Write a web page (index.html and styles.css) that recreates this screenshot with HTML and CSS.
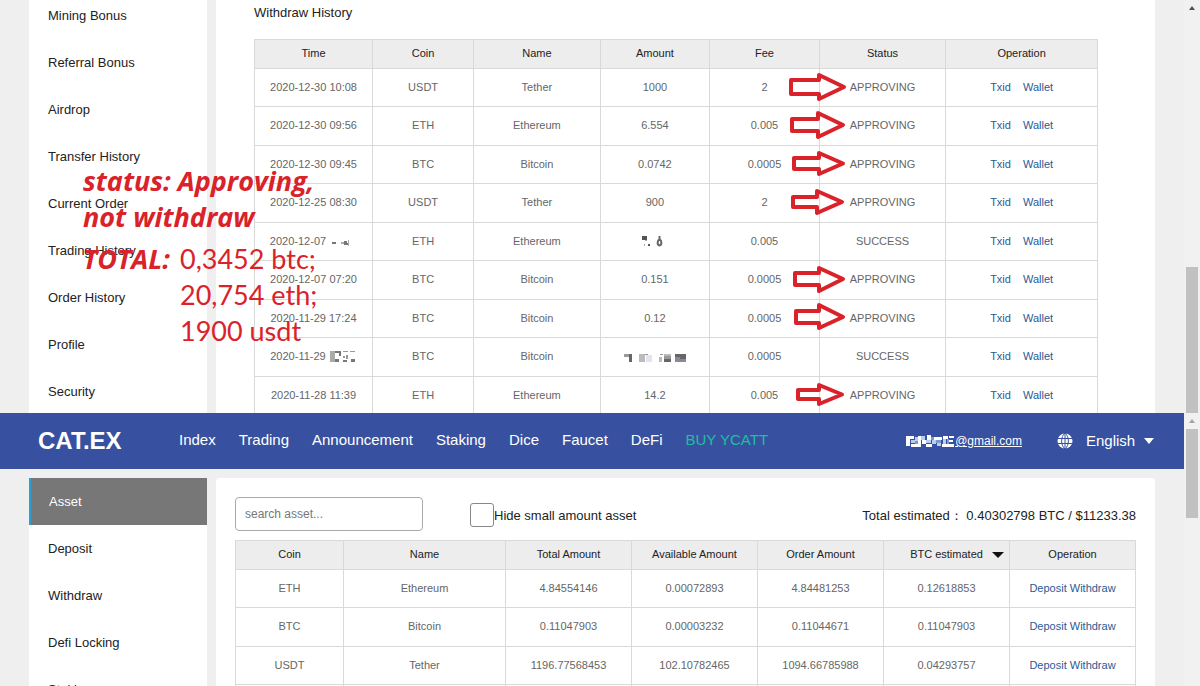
FILE: index.html
```html
<!DOCTYPE html>
<html lang="en">
<head>
  <meta charset="UTF-8" />
  <meta name="viewport" content="width=device-width, initial-scale=1.0"/>
  <title>CAT.EX – Asset</title>
  <link rel="stylesheet" href="styles.css">
</head>
<body>

  <section class="pane pane-history">
    <div class="layout">
      <nav class="sidebar">
        <a href="#">Mining Bonus</a>
        <a href="#">Referral Bonus</a>
        <a href="#">Airdrop</a>
        <a href="#">Transfer History</a>
        <a href="#">Current Order</a>
        <a href="#">Trading History</a>
        <a href="#">Order History</a>
        <a href="#">Profile</a>
        <a href="#">Security</a>
      </nav>

      <main class="history">
        <h2>Withdraw History</h2>
        <table class="history-table">
          <thead>
            <tr><th>Time</th><th>Coin</th><th>Name</th><th>Amount</th><th>Fee</th><th>Status</th><th>Operation</th></tr>
          </thead>
          <tbody>
            <tr>
              <td>2020-12-30 10:08</td><td>USDT</td><td>Tether</td><td>1000</td><td>2</td>
              <td class="status">APPROVING<svg class="arrow" viewBox="0 0 64 38"><path d="M5 12H33V7L58 19L33 31V26H5Z"/></svg></td>
              <td class="ops"><a href="#">Txid</a><a href="#">Wallet</a></td>
            </tr>
            <tr>
              <td>2020-12-30 09:56</td><td>ETH</td><td>Ethereum</td><td>6.554</td><td>0.005</td>
              <td class="status">APPROVING<svg class="arrow" viewBox="0 0 64 38"><path d="M6 13H32V7L57 19L32 31V25H6Z"/></svg></td>
              <td class="ops"><a href="#">Txid</a><a href="#">Wallet</a></td>
            </tr>
            <tr>
              <td>2020-12-30 09:45</td><td>BTC</td><td>Bitcoin</td><td>0.0742</td><td>0.0005</td>
              <td class="status">APPROVING<svg class="arrow" viewBox="0 0 64 38"><path d="M8 13H33V8L57 18.5L33 29V24H8Z"/></svg></td>
              <td class="ops"><a href="#">Txid</a><a href="#">Wallet</a></td>
            </tr>
            <tr>
              <td>2020-12-25 08:30</td><td>USDT</td><td>Tether</td><td>900</td><td>2</td>
              <td class="status">APPROVING<svg class="arrow" viewBox="0 0 64 38"><path d="M7 14H31V8L56 19L31 30V24H7Z"/></svg></td>
              <td class="ops"><a href="#">Txid</a><a href="#">Wallet</a></td>
            </tr>
            <tr>
              <td>2020-12-07 <svg class="mosaic" width="28" height="10" viewBox="0 0 28 10"><path fill="#777" d="M3 5h4v2H3zM15 4h3v4h-3zM18 6h2v2h-2z"/><path fill="#aaa" d="M12 5h3v2h-3zM19 3h1v6h-1z"/></svg></td>
              <td>ETH</td><td>Ethereum</td>
              <td><svg class="mosaic" width="28" height="12" viewBox="0 0 28 12"><path fill="#555" d="M1 1h5v4H1zM7 9h2v2H7z"/><path fill="#aaa" d="M3 9h1v2H3zM4 5h2v1H4z"/><path fill="none" stroke="#666" stroke-width="2" d="M18.500 4.500C16 5.500 16 10 18.500 10.500C21 10 21 5.500 18.500 4.500ZM18.500 1v3"/></svg></td>
              <td>0.005</td><td class="status">SUCCESS</td>
              <td class="ops"><a href="#">Txid</a><a href="#">Wallet</a></td>
            </tr>
            <tr>
              <td>2020-12-07 07:20</td><td>BTC</td><td>Bitcoin</td><td>0.151</td><td>0.0005</td>
              <td class="status">APPROVING<svg class="arrow" viewBox="0 0 64 38"><path d="M9 13H33V8L57 19L33 31V25H9Z"/></svg></td>
              <td class="ops"><a href="#">Txid</a><a href="#">Wallet</a></td>
            </tr>
            <tr>
              <td>2020-11-29 17:24</td><td>BTC</td><td>Bitcoin</td><td>0.12</td><td>0.0005</td>
              <td class="status">APPROVING<svg class="arrow" viewBox="0 0 64 38"><path d="M10 12H33V6L57 18L33 29V24H10Z"/></svg></td>
              <td class="ops"><a href="#">Txid</a><a href="#">Wallet</a></td>
            </tr>
            <tr>
              <td>2020-11-29 <svg class="mosaic" width="28" height="11" viewBox="0 0 28 11"><path fill="#aaa" d="M1 0h5v11H1z"/><path fill="#777" d="M6 0h4v2H6zM6 8h4v3H6zM10 0h2v5h-2zM14 9h4v2h-4zM22 8h4v3h-4z"/><path fill="#999" d="M14 0h5v1h-5zM21 0h5v1h-5zM17 4h2v4h-2zM14 5h2v2h-2z"/></svg></td>
              <td>BTC</td><td>Bitcoin</td>
              <td><svg class="mosaic" width="62" height="9" viewBox="0 0 62 9"><path fill="#999" d="M0 1h7v3H0zM21 1h3v1h-3zM36 1h3v1h-3zM40 3h7v4h-7z"/><path fill="#666" d="M5 1h3v8H5zM40 6h7v3h-7zM51 1h11v5H51z"/><path fill="#bbb" d="M15 1h6v8h-6zM35 4h3v5h-3zM40 1h7v2h-7z"/><path fill="#e2e4f0" d="M22 2h6v7h-6z"/><path fill="#8a8a96" d="M51 4h5v5h-5zM56 6h6v3h-6z"/></svg></td>
              <td>0.0005</td><td class="status">SUCCESS</td>
              <td class="ops"><a href="#">Txid</a><a href="#">Wallet</a></td>
            </tr>
            <tr>
              <td>2020-11-28 11:39</td><td>ETH</td><td>Ethereum</td><td>14.2</td><td>0.005</td>
              <td class="status">APPROVING<svg class="arrow" viewBox="0 0 64 38"><path d="M12 14H33V9L56 18.5L33 28V23H12Z"/></svg></td>
              <td class="ops"><a href="#">Txid</a><a href="#">Wallet</a></td>
            </tr>
          </tbody>
        </table>
      </main>
    </div>
    <div class="scrollbar">
      <svg width="6" height="4" viewBox="0 0 6 4"><path fill="#505050" d="M0 4L3 0L6 4Z"/></svg>
      <div class="thumb thumb-history"></div>
    </div>

    <div class="note">
      <p><b>status: Approving,<br>not withdraw</b></p>
      <dl>
        <dt>TOTAL:</dt>
        <dd>0,3452 btc;</dd>
        <dd>20,754 eth;</dd>
        <dd>1900 usdt</dd>
      </dl>
    </div>
  </section>

  <section class="pane pane-asset">
    <div class="page">
      <header>
        <a class="logo" href="#">CAT.EX</a>
        <nav class="menu">
          <a href="#">Index</a>
          <a href="#">Trading</a>
          <a href="#">Announcement</a>
          <a href="#">Staking</a>
          <a href="#">Dice</a>
          <a href="#">Faucet</a>
          <a href="#">DeFi</a>
          <a class="buy" href="#">BUY YCATT</a>
        </nav>
        <a class="account" href="#"><svg width="49" height="13" viewBox="0 0 49 13"><path fill="#fff" d="M0 1h8v3H0zM0 4h4v7H0zM5 9h10v3H5zM12 1h3v8h-3zM16 5h4v4h-4zM21 0h4v5h-4zM20 9h6v3h-6zM28 2h8v3h-8zM37 1h5v3h-5zM43 1h5v2h-5zM36 9h12v3H36zM43 5h4v2h-4z"/><path fill="#b9cdf0" d="M5 5h4v3H5zM9 2h3v4H9zM15 1h4v4h-4zM20 5h5v3h-5zM26 5h4v4h-4zM31 8h4v3h-4zM37 4h3v5h-3z"/><path fill="#7f98d0" d="M9 6h3v3H9zM25 2h3v3h-3zM30 5h5v3h-5zM41 4h2v5h-2z"/></svg>@gmail.com</a>
        <div class="language">
          <svg width="16" height="16" viewBox="0 0 16 16"><circle cx="8" cy="8" r="7.500" fill="#fff"/><path fill="none" stroke="#3751a0" d="M0 5.500h16M0 10.500h16M8 0v16M8 0C3.500 3.500 3.500 12.500 8 16M8 0C12.500 3.500 12.500 12.500 8 16"/></svg>
          <select aria-label="Language"><option>English</option></select>
          <svg width="10" height="6" viewBox="0 0 10 6"><path fill="#fff" d="M0 0H10L5 6Z"/></svg>
        </div>
      </header>

      <div class="layout">
        <nav class="sidebar">
          <a class="active" href="#">Asset</a>
          <a href="#">Deposit</a>
          <a href="#">Withdraw</a>
          <a href="#">Defi Locking</a>
          <a href="#">Staking</a>
        </nav>

        <main class="asset">
          <div class="toolbar">
            <input type="text" class="search" placeholder="search asset..." aria-label="search asset" />
            <label><input type="checkbox" />Hide small amount asset</label>
            <p>Total estimated： 0.40302798 BTC / $11233.38</p>
          </div>
          <table class="asset-table">
            <thead>
              <tr>
                <th>Coin</th><th>Name</th><th>Total Amount</th><th>Available Amount</th><th>Order Amount</th>
                <th><button type="button" class="sort">BTC estimated</button></th>
                <th>Operation</th>
              </tr>
            </thead>
            <tbody>
              <tr><td>ETH</td><td>Ethereum</td><td>4.84554146</td><td>0.00072893</td><td>4.84481253</td><td>0.12618853</td><td><a href="#">Deposit</a> <a href="#">Withdraw</a></td></tr>
              <tr><td>BTC</td><td>Bitcoin</td><td>0.11047903</td><td>0.00003232</td><td>0.11044671</td><td>0.11047903</td><td><a href="#">Deposit</a> <a href="#">Withdraw</a></td></tr>
              <tr><td>USDT</td><td>Tether</td><td>1196.77568453</td><td>102.10782465</td><td>1094.66785988</td><td>0.04293757</td><td><a href="#">Deposit</a> <a href="#">Withdraw</a></td></tr>
              <tr><td></td><td></td><td></td><td></td><td></td><td></td><td></td></tr>
            </tbody>
          </table>
        </main>
      </div>
    </div>
    <div class="scrollbar">
      <svg width="6" height="4" viewBox="0 0 6 4"><path fill="#a3a3a3" d="M0 4L3 0L6 4Z"/></svg>
      <div class="thumb thumb-asset"></div>
    </div>
  </section>

</body>
</html>
```

FILE: styles.css
```css
* {
  box-sizing: border-box;
}
body {
  display: flex;
  flex-direction: column;
  height: 100vh;
  margin: 0;
  overflow: hidden;
  background-color: #efefef;
  color: #222;
  font-family: "Liberation Sans", Arial, sans-serif;
  font-size: 13px;
}
a {
  color: inherit;
  text-decoration: none;
}
h2, p, dl, dd {
  margin: 0;
}

/* the two scrolled windows */
.pane {
  position: relative;
  display: flex;
  overflow: hidden;
}
.pane-history {
  flex: none;
  height: 413px;
}
.pane-asset {
  flex: 1;
}
.page {
  flex: 1;
}
.layout {
  flex: 1;
  display: flex;
  gap: 9px;
  padding: 0 29px;
}
.pane-asset .layout {
  padding-top: 9px;
}
.scrollbar {
  display: flex;
  flex-direction: column;
  align-items: center;
  width: 16px;
  padding-top: 6px;
  background-color: #f1f1f1;
}
.thumb {
  width: 12px;
  background-color: #c1c1c1;
}
.thumb-history {
  flex: 1;
  margin-top: 257px;
}
.thumb-asset {
  height: 89px;
  margin-top: 6px;
}

/* side menu */
.sidebar {
  flex: none;
  width: 178px;
  background-color: #fff;
}
.pane-history .sidebar {
  margin-top: -8px;
}
.sidebar a {
  display: block;
  height: 47px;
  padding-left: 19px;
  line-height: 47px;
}
.sidebar .active {
  border-left: 2px solid #2a9fd0;
  padding-left: 18px;
  background-color: #777;
  color: #fff;
}

/* tables */
table {
  width: 100%;
  border-collapse: collapse;
  table-layout: fixed;
  font-size: 11px;
  text-align: center;
}
th, td {
  padding: 0 0 2px;
  border: 1px solid #d9d9d9;
}
th {
  height: 29px;
  background-color: #ededed;
  font-weight: normal;
}
td {
  height: 38px;
  color: #666;
}
tr:nth-child(even) td {
  height: 39px;
}
td a {
  color: #2a5a94;
}
.ops a {
  margin: 0 6px;
}
.mosaic {
  vertical-align: -2px;
}

.history {
  flex: 1;
  padding: 0 57px 0 38px;
  background-color: #fff;
}
.history h2 {
  padding: 4px 0 18px;
  font-size: 13px;
  font-weight: normal;
  line-height: 17px;
}
.history-table th:nth-child(1) { width: 14%; }
.history-table th:nth-child(2) { width: 12%; }
.history-table th:nth-child(3) { width: 15%; }
.history-table th:nth-child(4) { width: 13%; }
.history-table th:nth-child(5) { width: 13%; }
.history-table th:nth-child(6) { width: 15%; }
.history-table th:nth-child(7) { width: 18%; }
.status {
  position: relative;
}
.arrow {
  position: absolute;
  left: -34px;
  top: -1px;
  width: 64px;
  height: 38px;
  fill: none;
  stroke: #d9222a;
  stroke-width: 4;
  stroke-linejoin: round;
}

/* red note lying over the page */
.note {
  position: absolute;
  left: 83px;
  top: 163px;
  color: #d9222a;
  font-family: Lato, sans-serif;
  font-size: 27px;
  line-height: 36px;
}
.note b, .note dt {
  font-family: "Open Sans", sans-serif;
  font-style: italic;
  font-weight: bold;
}
.note dl {
  display: grid;
  grid-template-columns: 97px auto;
  margin-top: 6px;
}
.note dd {
  grid-column: 2;
}

/* top bar */
header {
  display: flex;
  align-items: center;
  height: 56px;
  padding: 0 30px 0 38px;
  background-color: #3751a0;
  color: #fff;
  font-size: 15px;
}
.logo {
  width: 141px;
  font-size: 24px;
  font-weight: bold;
}
.menu {
  display: flex;
  gap: 23px;
  padding-bottom: 3px;
}
.buy {
  color: #1fbf9c;
}
.account {
  display: flex;
  align-items: center;
  margin-left: auto;
  font-size: 12px;
  text-decoration: underline;
}
.language {
  display: flex;
  align-items: center;
  margin-left: 35px;
}
.language select {
  appearance: none;
  width: 58px;
  margin-left: 13px;
  padding: 0 0 2px;
  border: none;
  background: none;
  color: #fff;
  font: inherit;
}

/* asset list */
.asset {
  flex: 1;
  padding: 19px;
  border-radius: 4px 4px 0 0;
  background-color: #fff;
}
.toolbar {
  display: flex;
  align-items: center;
  margin-bottom: 9px;
}
.toolbar label {
  display: flex;
  align-items: center;
  margin-left: 47px;
  padding-top: 2px;
}
.toolbar p {
  margin-left: auto;
  padding-top: 4px;
}
.search {
  width: 188px;
  height: 34px;
  padding: 0 9px;
  border: 1px solid #aaa;
  border-radius: 4px;
  font: 12px "Liberation Sans", Arial, sans-serif;
}
.search::placeholder {
  color: #777;
}
.toolbar [type="checkbox"] {
  appearance: none;
  width: 24px;
  height: 24px;
  margin: 0;
  border: 1px solid #888;
  border-radius: 3px;
}
.asset-table th {
  width: 14%;
}
.asset-table th:nth-child(1) { width: 12%; }
.asset-table th:nth-child(2) { width: 18%; }
.sort {
  position: relative;
  padding: 0;
  border: none;
  background: none;
  color: inherit;
  font: inherit;
}
.sort::after {
  content: "";
  position: absolute;
  left: 100%;
  top: 4px;
  margin-left: 9px;
  border: 6px solid transparent;
  border-top-color: #111;
  border-bottom: none;
}
```
